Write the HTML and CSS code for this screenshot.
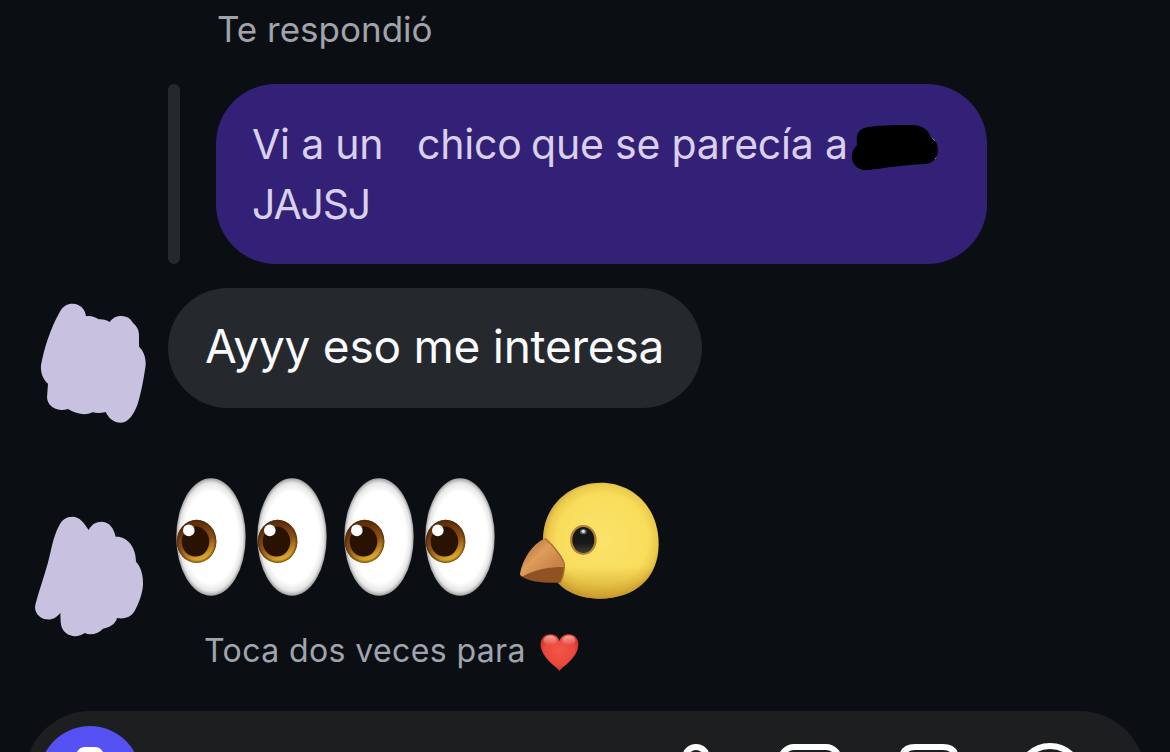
FILE: index.html
```html
<!DOCTYPE html>
<html lang="es">
<head>
  <meta charset="UTF-8">
  <title>Chat</title>
  <link rel="stylesheet" href="styles.css">
</head>
<body>
  <div class="chat">
    <div class="reply-label">Te respondió</div>

    <!-- Mensaje citado -->
    <div class="quote">
      <div class="quote-bar"></div>
      <div class="bubble bubble-quote">
        <div class="line"><span class="w1">Vi a un</span><span class="w2">chico</span><span class="w3">que se parecía a</span><svg class="scribble" width="88" height="48" viewBox="870 162 264 144"><path d="M890 205C892 185 900 175 925 171C965 165 1010 164 1055 165C1085 165 1103 177 1112 200C1130 209 1137 232 1132 252C1128 270 1116 280 1095 282C1020 286 975 294 925 300C895 304 872 282 876 254C878 240 884 232 891 226Z"/><path class="spark" d="M1116 203l9 10M1125 267l3-4"/></svg></div>
        <div class="line line-last">JAJSJ</div>
      </div>
    </div>

    <div class="message">
      <svg class="avatar" width="168" height="160" viewBox="-60 24 504 480">
        <path d="M118 98C128 78 142 71 158 71C180 72 196 86 198 109C212 106 224 110 236 118C248 117 260 120 269 126C278 113 290 108 305 108C323 109 332 117 339 129C354 142 358 154 357 174L357 200C371 213 378 232 377 256C371 298 363 342 352 375C342 400 330 420 312 427C289 433 267 418 257 396C244 400 231 400 218 397C194 408 170 402 144 387C115 397 82 382 81 352L84 311C68 299 61 274 63 256C72 205 92 144 118 98Z"/>
      </svg>
      <div class="bubble bubble-text">Ayyy eso me interesa</div>
    </div>

    <div class="message message-emoji">
      <svg class="avatar" width="168" height="190" viewBox="-60 0 504 570">
        <path d="M118 196C125 179 140 170 157 170C181 171 190 187 206 210C215 193 227 185 246 185C270 187 281 205 287 230C319 228 348 258 348 305C364 323 370 347 369 375C367 402 356 432 342 456C330 473 310 478 291 474C286 492 271 502 249 506C233 522 212 527 194 519C179 531 153 532 138 519C121 505 122 488 121 458C109 474 94 480 77 478C57 474 41 455 46 434C57 391 72 351 83 311C95 269 98 233 118 196Z"/>
      </svg>
      <div class="emoji-block">
        <div class="emojis">
          <svg width="168" height="140" viewBox="0 0 168 140">
            <defs>
              <radialGradient id="white" cx="0.5" cy="0.5" r="0.5">
                <stop offset="0.78" stop-color="#fff"/>
                <stop offset="0.92" stop-color="#e6e6e6"/>
                <stop offset="1" stop-color="#a0a0a0"/>
              </radialGradient>
              <linearGradient id="iris" x1="0.3" y1="0" x2="0.65" y2="1">
                <stop offset="0.2" stop-color="#65310b"/>
                <stop offset="0.55" stop-color="#8b5215"/>
                <stop offset="0.9" stop-color="#dba92b"/>
              </linearGradient>
              <radialGradient id="irisEdge">
                <stop offset="0.86" stop-color="#43220a" stop-opacity="0"/>
                <stop offset="1" stop-color="#43220a" stop-opacity="0.7"/>
              </radialGradient>
              <g id="eye">
                <ellipse cx="43" cy="67" rx="34.7" ry="58.8" fill="url(#white)"/>
                <ellipse cx="28.6" cy="71.4" rx="19.8" ry="21.6" fill="url(#iris)"/>
                <ellipse cx="28.6" cy="71.4" rx="19.8" ry="21.6" fill="url(#irisEdge)"/>
                <ellipse cx="27.5" cy="71.6" rx="13.8" ry="15" fill="#2a1203"/>
                <circle cx="20.8" cy="60.4" r="5.8" fill="#fff"/>
              </g>
            </defs>
            <use href="#eye"/>
            <use href="#eye" x="81"/>
          </svg>
          <svg width="168" height="140" viewBox="0 0 168 140">
            <use href="#eye"/>
            <use href="#eye" x="81"/>
          </svg>
          <!-- Pollito -->
          <svg width="168" height="140" viewBox="-18 0 504 420">
            <defs>
              <radialGradient id="head" gradientUnits="userSpaceOnUse" cx="278" cy="208" r="182">
                <stop offset="0" stop-color="#fbe36a"/>
                <stop offset="0.75" stop-color="#f8dd5c"/>
                <stop offset="0.9" stop-color="#ecca4b"/>
                <stop offset="1" stop-color="#cea63a"/>
              </radialGradient>
              <linearGradient id="chin" x1="0" y1="0" x2="0" y2="1">
                <stop offset="0.72" stop-color="#c89624" stop-opacity="0"/>
                <stop offset="1" stop-color="#c08f22" stop-opacity="0.7"/>
              </linearGradient>
              <linearGradient id="beak" x1="0.25" y1="0.2" x2="0.8" y2="0.7">
                <stop offset="0" stop-color="#c37d43"/>
                <stop offset="0.4" stop-color="#dd9d5d"/>
                <stop offset="1" stop-color="#c98346"/>
              </linearGradient>
              <linearGradient id="pupil" x1="0" y1="0" x2="0" y2="1">
                <stop offset="0" stop-color="#151817"/>
                <stop offset="0.6" stop-color="#151817"/>
                <stop offset="1" stop-color="#3d3e37"/>
              </linearGradient>
            </defs>
            <path fill="url(#head)" d="M99 208C99 112 173 38 272 38C370 38 446 112 446 222C446 325 375 386 266 386C215 386 172 369 145 340L110 270Z"/>
            <path fill="url(#chin)" d="M99 208C99 112 173 38 272 38C370 38 446 112 446 222C446 325 375 386 266 386C215 386 172 369 145 340L110 270Z"/>
            <path fill="#905123" d="M31 318C58 300 120 288 163 291C162 310 157 326 150 338C110 340 60 337 31 318Z"/>
            <path fill="url(#beak)" d="M105 205C66 223 38 268 30 311C30 318 36 320 42 317C76 298 118 291 162 290C168 274 137 232 105 205Z"/>
            <path fill="none" stroke="#a66a32" stroke-width="4" d="M105 205C137 232 167 274 163 290C162 310 157 326 150 338"/>
            <ellipse cx="220" cy="210" rx="40" ry="45" fill="#b67c34"/>
            <ellipse cx="220" cy="210" rx="33" ry="39" fill="url(#pupil)"/>
            <ellipse cx="220" cy="185" rx="10" ry="8" fill="#5b616a"/>
            <circle cx="220" cy="184" r="5" fill="#dde5ee"/>
          </svg>
        </div>
        <div class="hint">
          <span>Toca dos veces para</span>
          <svg class="heart" width="39" height="39" viewBox="0 0 120 120">
            <defs>
              <radialGradient id="red" cx="0.5" cy="0.45" r="0.6">
                <stop offset="0" stop-color="#f3564a"/>
                <stop offset="0.65" stop-color="#e9483b"/>
                <stop offset="1" stop-color="#c22f24"/>
              </radialGradient>
              <linearGradient id="shine" x1="0" y1="0" x2="0" y2="1">
                <stop offset="0" stop-color="#ffc7bc" stop-opacity="0.75"/>
                <stop offset="1" stop-color="#ffc7bc" stop-opacity="0"/>
              </linearGradient>
            </defs>
            <path fill="url(#red)" d="M60 117C55 106 2 76 2 35C2 16 14 4 31 4C46 4 56 12 60 25C64 12 74 4 89 4C106 4 118 16 118 35C118 76 65 106 60 117Z"/>
            <ellipse cx="31" cy="23" rx="20" ry="15" fill="url(#shine)"/>
            <ellipse cx="89" cy="23" rx="20" ry="15" fill="url(#shine)"/>
          </svg>
        </div>
      </div>
    </div>

    <!-- Barra para escribir -->
    <div class="composer">
      <div class="camera">
        <svg width="60" height="50" viewBox="0 0 60 50"><path fill="#fff" d="M16 8C17 3 20 0 26 0H34C40 0 43 3 44 8H52Q60 8 60 16V42Q60 50 52 50H8Q0 50 0 42V16Q0 8 8 8Z"/></svg>
      </div>
      <div class="tools">
        <svg width="50" height="64" viewBox="0 0 50 64"><rect x="14" y="3" width="22" height="38" rx="11"/><path d="M4 30C4 56 46 56 46 30M25 50V62"/></svg>
        <svg width="64" height="64" viewBox="0 0 64 64"><rect x="3" y="3" width="58" height="58" rx="13"/><path d="M4 50L22 33L48 60"/></svg>
        <svg width="60" height="64" viewBox="0 0 60 64"><path d="M16 3H44Q57 3 57 16V40L38 61H16Q3 61 3 48V16Q3 3 16 3Z"/></svg>
        <svg class="plus" width="68" height="68" viewBox="0 0 68 68"><circle cx="34" cy="34" r="31"/><path d="M34 20V48M20 34H48"/></svg>
      </div>
    </div>
  </div>
</body>
</html>
```
FILE: styles.css
```css
body {
  margin: 0;
  background: #0b0f13;
  font-family: Inter, "Liberation Sans", sans-serif;
  color: #f9fafc;
}
.chat {
  width: 1170px;
  height: 752px;
  overflow: hidden;
}
svg {
  display: block;
  flex-shrink: 0;
}
.reply-label {
  height: 60px;
  line-height: 58px;
  margin-bottom: 24px;
  padding-left: 217px;
  font-size: 35px;
  color: #a0a3ab;
}
.quote {
  display: flex;
  gap: 36px;
  padding-left: 168px;
}
.quote-bar {
  width: 12px;
  height: 180px;
  border-radius: 6px;
  background: #25282c;
}
.bubble {
  box-sizing: border-box;
  border-radius: 60px;
  white-space: nowrap;
}
.bubble-quote {
  width: 771px;
  height: 180px;
  padding: 30px 36px;
  background: #332177;
  color: #dad0ec;
  font-size: 41px;
  letter-spacing: -0.2px;
}
.line {
  display: flex;
  height: 60px;
  line-height: 60px;
}
.line-last {
  letter-spacing: -1.2px;
}
.w1 {
  width: 165px;
}
.w2 {
  width: 114px;
}
.w3 {
  width: 319px;
}
.scribble {
  margin-top: 10px;
  fill: #000;
}
.spark {
  stroke: #dad0ec;
  stroke-width: 2;
}
.message {
  display: flex;
  align-items: flex-start;
  height: 160px;
  margin-top: 24px;
}
.avatar {
  fill: #c8c2e0;
}
.bubble-text {
  width: 534px;
  height: 120px;
  padding-left: 37px;
  line-height: 117px;
  background: #25282d;
  font-size: 46px;
  letter-spacing: -0.25px;
}
.message-emoji {
  height: 190px;
  margin-top: 12px;
}
.emoji-block {
  padding-top: 10px;
}
.emojis {
  display: flex;
}
.hint {
  display: flex;
  align-items: center;
  gap: 14px;
  height: 44px;
  margin-top: 20px;
  padding-left: 36px;
  font-size: 32px;
  line-height: 38px;
  letter-spacing: 0.4px;
  color: #a0a4ae;
}
.hint span {
  padding-bottom: 2px;
}
.composer {
  display: flex;
  justify-content: space-between;
  box-sizing: border-box;
  width: 1122px;
  height: 134px;
  margin: 61px 0 0 24px;
  padding: 15px 62px 0 15px;
  border-radius: 67px;
  background: #1d1e20;
}
.camera {
  display: flex;
  justify-content: center;
  box-sizing: border-box;
  width: 102px;
  height: 102px;
  padding-top: 21px;
  border-radius: 50%;
  background: #5551f3;
}
.tools {
  display: flex;
  gap: 57px;
  padding-top: 18px;
  fill: none;
  stroke: #fff;
  stroke-width: 6;
}
.plus {
  margin-top: -1px;
}
```
